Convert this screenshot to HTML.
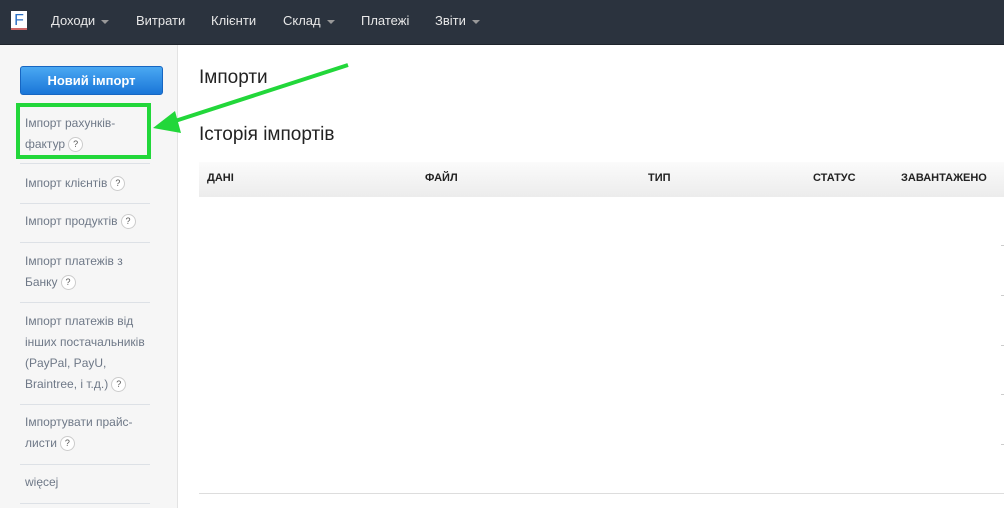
<!DOCTYPE html>
<html><head><meta charset="utf-8"><style>
*{margin:0;padding:0;box-sizing:border-box}
body{width:1004px;height:508px;overflow:hidden;background:#fff;font-family:"Liberation Sans",sans-serif;position:relative}
.nav{position:absolute;left:0;top:0;width:1004px;height:45px;background:#2b333e;border-bottom:1px solid #1e242c}
.nav span{position:absolute;top:13px;color:#e8e8e8;font-size:13px}
.car{display:inline-block;width:0;height:0;border-left:4px solid transparent;border-right:4px solid transparent;border-top:4px solid #999;margin-left:6px;vertical-align:middle}
.logo{position:absolute;left:11px;top:11px;width:16px;height:19px;background:#fff;color:#2a6fc4;font-size:16px;line-height:19px;text-align:center;border-bottom:2px solid #c66}
.side{position:absolute;left:0;top:45px;width:178px;height:463px;background:#f6f6f6;border-right:1px solid #e3e3e3}
.btn{position:absolute;left:20px;top:66px;width:143px;height:29px;border-radius:3px;background:linear-gradient(#4aa8f2,#1a76d8);border:1px solid #1766c2;color:#fff;font-weight:bold;font-size:13px;text-align:center;line-height:27px}
.it{position:absolute;left:25px;color:#6e7887;font-size:12px;line-height:21px;width:125px}
.q{display:inline-block;width:15px;height:15px;border:1px solid #ccc;border-radius:50%;background:#fff;font-size:9px;line-height:13px;text-align:center;color:#555;vertical-align:middle;margin-left:3px}
.hr{position:absolute;left:20px;width:130px;height:1px;background:#dde1e6}
.green{position:absolute;left:16px;top:103px;width:135px;height:56px;border:4px solid #22d73a}
h1{position:absolute;left:199px;font-weight:normal;font-size:19px;color:#222}
.th{position:absolute;left:199px;top:162px;width:805px;height:35px;background:linear-gradient(#fbfbfb,#ececec)}
.th span{position:absolute;top:10px;font-weight:bold;font-size:11px;color:#222}
.d{position:absolute;left:1001px;width:3px;height:1px;background:#ccc}
</style></head><body>
<div class="nav">
<div class="logo">F</div>
<span style="left:51px">Доходи<i class="car"></i></span>
<span style="left:136px">Витрати</span>
<span style="left:211px">Клієнти</span>
<span style="left:283px">Склад<i class="car"></i></span>
<span style="left:361px">Платежі</span>
<span style="left:435px">Звіти<i class="car"></i></span>
</div>
<div class="side"></div>
<div class="btn">Новий імпорт</div>
<div class="it" style="top:113px">Імпорт рахунків-фактур<span class="q">?</span></div>
<div class="green"></div>
<div class="hr" style="top:163px"></div>
<div class="it" style="top:173px">Імпорт клієнтів<span class="q">?</span></div>
<div class="hr" style="top:203px"></div>
<div class="it" style="top:211px">Імпорт продуктів<span class="q">?</span></div>
<div class="hr" style="top:242px"></div>
<div class="it" style="top:251px">Імпорт платежів з Банку<span class="q">?</span></div>
<div class="hr" style="top:302px"></div>
<div class="it" style="top:311px;width:130px">Імпорт платежів від інших постачальників (PayPal, PayU, Braintree, і т.д.)<span class="q">?</span></div>
<div class="hr" style="top:404px"></div>
<div class="it" style="top:412px">Імпортувати прайс-листи<span class="q">?</span></div>
<div class="hr" style="top:464px"></div>
<div class="it" style="top:472px">więcej</div>
<div class="hr" style="top:503px"></div>
<h1 style="top:67px">Імпорти</h1>
<h1 style="top:124px">Історія імпортів</h1>
<div class="th"><span style="left:8px">ДАНІ</span><span style="left:226px">ФАЙЛ</span><span style="left:449px">ТИП</span><span style="left:614px">СТАТУС</span><span style="left:702px">ЗАВАНТАЖЕНО</span></div>
<div class="d" style="top:245px"></div><div class="d" style="top:295px"></div><div class="d" style="top:345px"></div><div class="d" style="top:394px"></div><div class="d" style="top:444px"></div>
<div style="position:absolute;left:199px;top:493px;width:805px;height:1px;background:#ddd"></div>
<svg style="position:absolute;left:0;top:0" width="1004" height="508"><line x1="348" y1="65" x2="172" y2="122" stroke="#22d73a" stroke-width="4"/><polygon points="153,128 175,111 181,133" fill="#22d73a"/></svg>
</body></html>
